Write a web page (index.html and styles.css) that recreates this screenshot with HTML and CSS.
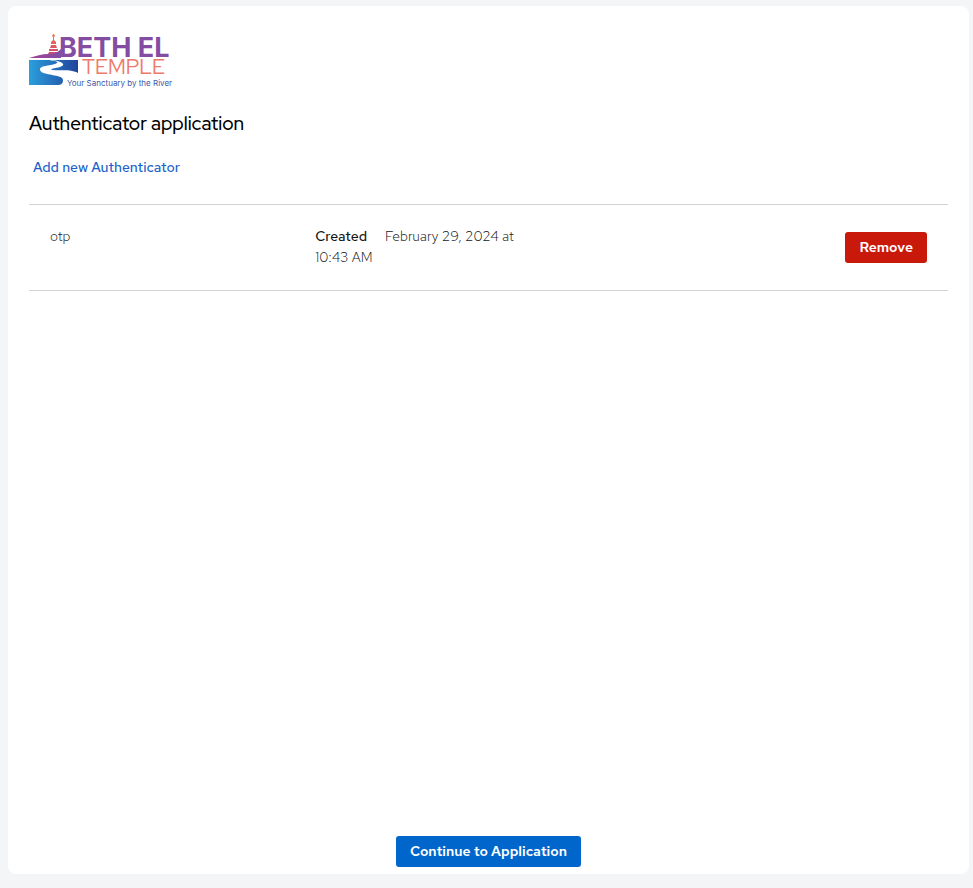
FILE: index.html
```html
<!DOCTYPE html>
<html lang="en">
<head>
    <meta charset="UTF-8">
    <meta name="viewport" content="width=device-width, initial-scale=1.0">
    <title>Authenticator application</title>
    <link rel="stylesheet" href="styles.css">
</head>
<body>
    <main class="panel">
        <svg class="logo" viewBox="0 0 143 54" role="img" aria-label="Beth El Temple">
            <defs>
                <linearGradient id="river" gradientUnits="userSpaceOnUse" x1="0" x2="49" y1="0" y2="0">
                    <stop offset="0" stop-color="#2b9fdc"/>
                    <stop offset="1" stop-color="#20429b"/>
                </linearGradient>
                <linearGradient id="hill" x1="0" x2="1" y1="0" y2="0">
                    <stop offset="0" stop-color="#a83f92"/>
                    <stop offset="1" stop-color="#7f50a5"/>
                </linearGradient>
                <linearGradient id="lighthouse" x1="0" x2="0" y1="0" y2="1">
                    <stop offset="0" stop-color="#f07a55"/>
                    <stop offset="1" stop-color="#c94a70"/>
                </linearGradient>
            </defs>
            <path fill="url(#lighthouse)" d="M24 0h1l1 2l-1 1v3l2 2v2h-5v-2l2-2V3l-1-1zM22 11h5l1 3h-7zM20 15h9v2h-9zM20 18h9l1 2H19z"/>
            <path fill="url(#hill)" d="M0 24C7 22 13 20 19 20C25 20 28 19 32 15V24Z"/>
            <!-- river bank -->
            <path fill="url(#river)" d="M0 26H20C28 27 31 28 26 30C18 32 10 32 11 36C13 42 34 40 34 46C34 50 32 51 28 51H0Z"/>
            <path fill="url(#river)" d="M24 26H49V39C42 35 31 37 23 36C19 34 36 34 34 30C33 28 29 27 24 26Z"/>
            <text class="logo-name" x="30" y="23">BETH EL</text>
            <text class="logo-temple" x="53" y="40">TEMPLE</text>
            <text class="logo-tagline" x="38" y="52">Your Sanctuary by the River</text>
        </svg>
        <h1 class="title">Authenticator application</h1>
        <a href="#" class="add-link">Add new Authenticator</a>
        <ul class="device-list">
            <li class="device">
                <div class="device-cell">otp</div>
                <div class="device-cell"><strong class="device-label">Created</strong>February 29, 2024 at 10:43&nbsp;AM</div>
                <div class="device-cell"></div>
                <button type="button" class="button button-danger">Remove</button>
            </li>
        </ul>
        <button type="button" class="button button-primary">Continue to Application</button>
    </main>
</body>
</html>
```
FILE: styles.css
```css
body {
    margin: 0;
    padding: 6px 4px 14px 8px;
    min-height: 100vh;
    box-sizing: border-box;
    display: flex;
    background-color: #f4f5f7;
    color: #151515;
    font-family: "Red Hat Text", Inter, sans-serif;
    font-size: 14px;
    line-height: 21px;
}
.panel {
    flex: 1;
    display: flex;
    flex-direction: column;
    align-items: flex-start;
    padding: 28px 21px 7px;
    border-radius: 8px;
    background-color: #fff;
}
.logo {
    width: 143px;
    height: 54px;
    overflow: visible;
}
.logo-name {
    fill: #854da2;
    font-family: Inter, sans-serif;
    font-size: 27px;
    font-weight: 700;
}
.logo-temple {
    fill: #ee7a6c;
    font-family: "Red Hat Display", "Red Hat Text", Inter, sans-serif;
    font-size: 21px;
    font-weight: 400;
}
.logo-tagline {
    fill: #3a58a8;
    font-family: Inter, sans-serif;
    font-size: 8px;
    font-weight: 400;
}
.title {
    margin: 22px 0 0;
    color: #000;
    font-family: "Red Hat Display", "Red Hat Text", Inter, sans-serif;
    font-size: 19px;
    font-weight: 500;
    line-height: 27px;
}
.add-link {
    margin: 20px 4px 26px;
    color: #1a62c9;
    font-weight: 500;
    text-decoration: none;
}
.device-list {
    align-self: stretch;
    margin: 0;
    padding: 0;
    list-style: none;
    border-top: 1px solid #d2d2d2;
}
.device {
    display: flex;
    align-items: center;
    padding: 21px 21px 22px;
    border-bottom: 1px solid #d2d2d2;
}
.device-cell {
    flex: 1;
    align-self: flex-start;
    box-sizing: border-box;
    padding-right: 21px;
    font-weight: 300;
}
.device-label {
    margin-right: 18px;
    font-weight: 500;
}
.button {
    padding: 5px 14px;
    border: none;
    border-radius: 3px;
    color: #fff;
    font-family: inherit;
    font-size: 14px;
    font-weight: 600;
    line-height: 21px;
    cursor: pointer;
}
.button-danger {
    background-color: #c9190b;
}
.button-danger:hover {
    background-color: #a30000;
}
.button-primary {
    align-self: center;
    margin-top: auto;
    background-color: #06c;
}
.button-primary:hover {
    background-color: #004080;
}
```
